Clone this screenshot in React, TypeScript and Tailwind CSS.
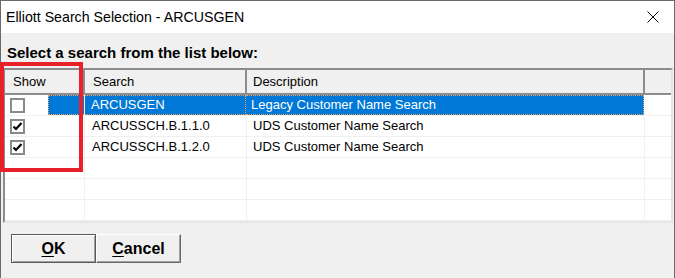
import React from 'react';

const rows = [
  { show: false, search: 'ARCUSGEN', desc: 'Legacy Customer Name Search', selected: true },
  { show: true, search: 'ARCUSSCH.B.1.1.0', desc: 'UDS Customer Name Search', selected: false },
  { show: true, search: 'ARCUSSCH.B.1.2.0', desc: 'UDS Customer Name Search', selected: false },
  { show: false, search: '', desc: '', selected: false, empty: true },
  { show: false, search: '', desc: '', selected: false, empty: true },
  { show: false, search: '', desc: '', selected: false, empty: true },
];

const CheckBox = ({ checked }: { checked: boolean }) => (
  <div className="w-[15px] h-[15px] bg-white border-2 border-[#8a8a8a] flex items-center justify-center">
    {checked && (
      <svg width="11" height="11" viewBox="0 0 11 11">
        <path d="M1.5 5.5 L4 8 L9.5 2" fill="none" stroke="#000" strokeWidth="2.2" />
      </svg>
    )}
  </div>
);

const App = () => {
  return (
    <div
      className="w-[675px] h-[278px] bg-[#f0f0f0] border-l border-t border-r border-[#6a6a6a] flex flex-col overflow-hidden"
      style={{ fontFamily: '"Liberation Sans", Arial, sans-serif' }}
    >
      {/* title bar */}
      <div className="h-[32px] bg-white flex items-center justify-between pl-[5px] pr-[15px] shrink-0">
        <span className="text-[14.2px] text-black leading-none">Elliott Search Selection - ARCUSGEN</span>
        <svg width="12" height="12" viewBox="0 0 12 12">
          <path d="M0.5 0.5 L11.5 11.5 M11.5 0.5 L0.5 11.5" stroke="#000" strokeWidth="1" />
        </svg>
      </div>

      <div className="pl-[6px] pt-[12px] h-[16px] box-content text-[15px] font-bold leading-[16px] text-black">
        Select a search from the list below:
      </div>

      {/* grid */}
      <div className="ml-[2px] mr-[1px] mt-[7px] h-[155px] border-2 border-t-[#8c8c8c] border-l-[#8c8c8c] border-b-[#e6e6e6] border-r-[#e6e6e6] bg-white overflow-hidden flex flex-col text-[13px] text-black">
        <div className="flex h-[25px] shrink-0 bg-[#f0f0f0]">
          <div className="w-[80px] border-r-2 border-b-2 border-[#8c8c8c] pl-[8px] flex items-center">Show</div>
          <div className="w-[162px] border-r-2 border-b-2 border-[#8c8c8c] pl-[8px] flex items-center">Search</div>
          <div className="w-[398px] border-r-2 border-b-2 border-[#8c8c8c] pl-[6px] flex items-center">Description</div>
          <div className="flex-1 border-b-2 border-[#8c8c8c]"></div>
        </div>
        {rows.map((r, i) => (
          <div key={i} className="flex h-[21px] shrink-0 border-b border-[#f0f0f0]">
            <div className="w-[80px] border-r border-[#f0f0f0] flex">
              <div className="w-[43px] pl-[5px] flex items-center">
                {!r.empty && <CheckBox checked={r.show} />}
              </div>
              {r.selected && (
                <div className="flex-1 bg-[#0078d7] border-l border-t border-b border-dotted border-[#f0a35a]"></div>
              )}
            </div>
            <div
              className={
                r.selected
                  ? 'w-[161px] bg-[#0078d7] text-white border-t border-b border-r border-dotted border-[#f0a35a] pl-[6px] flex items-center'
                  : 'w-[162px] border-r border-[#f0f0f0] pl-[7px] flex items-center'
              }
            >
              {r.search}
            </div>
            <div
              className={
                r.selected
                  ? 'w-[398px] bg-[#0078d7] text-white border-t border-b border-r border-dotted border-[#f0a35a] pl-[5px] flex items-center'
                  : 'w-[398px] border-r border-[#f0f0f0] pl-[6px] flex items-center'
              }
            >
              {r.desc}
            </div>
            <div className="flex-1"></div>
          </div>
        ))}
      </div>

      {/* buttons */}
      <div className="flex pl-[10px] mt-[11px]">
        <button className="w-[85px] h-[29px] bg-[#f0f0f0] border border-[#5a5a5a] shadow-[inset_1px_1px_0_#ffffff,inset_-1px_-1px_0_#a0a0a0] text-[16px] font-bold text-black flex items-center justify-center">
          <span><span className="underline underline-offset-2">O</span>K</span>
        </button>
        <button className="w-[85px] h-[29px] bg-[#f0f0f0] border border-t-white border-l-white border-b-[#696969] border-r-[#696969] shadow-[inset_-1px_-1px_0_#a0a0a0] text-[16px] font-bold text-black flex items-center justify-center">
          <span><span className="underline underline-offset-2">C</span>ancel</span>
        </button>
      </div>

      {/* highlight frame around the Show column */}
      <div className="absolute left-0 top-[62px] w-[83px] h-[110px] border-4 border-[#e8202a] pointer-events-none"></div>
    </div>
  );
};

export default App;
